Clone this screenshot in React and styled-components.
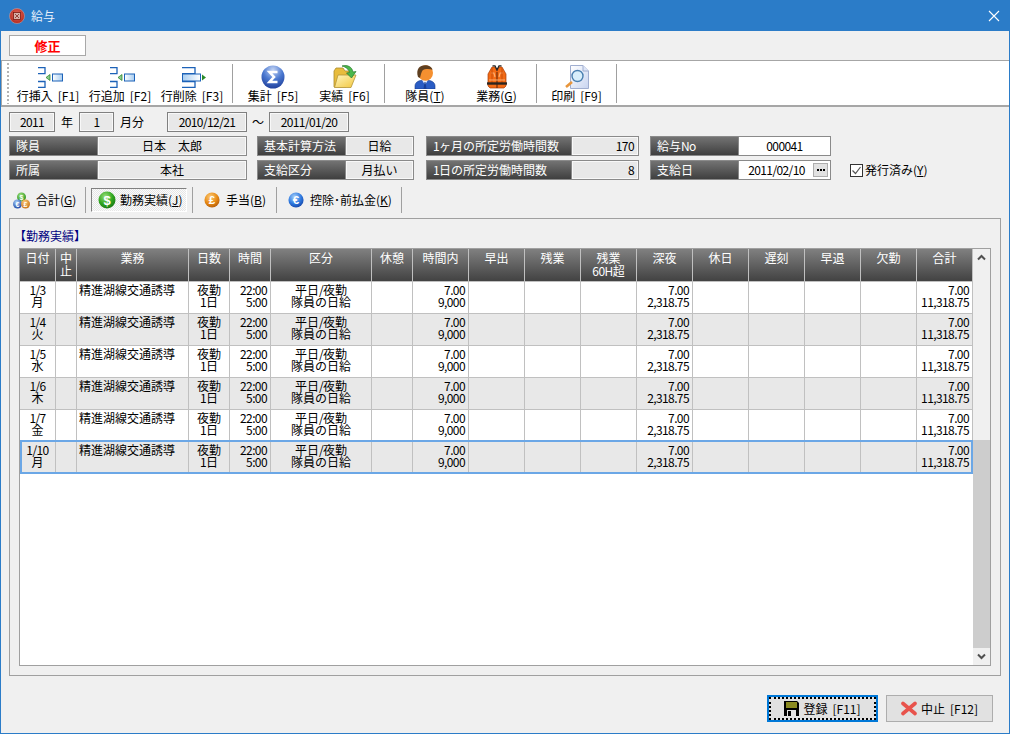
import React from "react";
import styled, { createGlobalStyle } from "styled-components";

const GlobalStyle = createGlobalStyle`
  html, body { margin: 0; padding: 0; background: #f0f0f0; }
  * { box-sizing: border-box; }
`;

const Window = styled.div`
  width: 1010px; height: 734px; display: flex; flex-direction: column;
  background: #f0f0f0; border: 1px solid #2b7cc8; border-top: 0; overflow: hidden;
  font-family: "Noto Sans CJK JP", "Liberation Sans", sans-serif; font-size: 12px; line-height: 12px; color: #000;
`;
const TitleBar = styled.div`
  height: 31px; flex: none; background: #2b7cc8; margin: 0 -1px; padding: 0 10px 0 9px;
  display: flex; align-items: center; color: #e8f0fa; gap: 6px;
`;
const TitleText = styled.span`flex: 1; font-size: 12px;`;
const ModeRow = styled.div`height: 29px; flex: none; padding: 4px 0 0 8px;`;
const ModeLabel = styled.div`
  width: 77px; height: 21px; background: #fff; border: 1px solid #a8a8a8; color: #f00; font-weight: 700;
  display: flex; align-items: center; justify-content: center; font-size: 13px;
`;
const Toolbar = styled.div`
  height: 47px; flex: none; background: #fff; border-top: 1px solid #a6a6a6; border-bottom: 2px solid #a6a6a6;
  border-left: 1px solid #a6a6a6; display: flex; align-items: flex-start;
`;
const Grip = styled.div`
  width: 2px; height: 41px; margin: 2px 3px 0 5px; flex: none;
  background: repeating-linear-gradient(to bottom, #b4b4b4 0 2px, transparent 2px 4px);
`;
const ToolBtn = styled.div`
  width: ${p => p.$w}px; flex: none; display: flex; flex-direction: column; align-items: center; padding-top: 4px;
  white-space: nowrap;
`;
const ToolIcon = styled.div`height: 24px; display: flex; align-items: center; justify-content: center; margin-bottom: 1px;`;
const ToolLabel = styled.div`line-height: 12px; height: 12px;`;
const ToolSep = styled.div`width: 1px; height: 39px; margin: 3px 4px 0; background: #a0a0a0; flex: none;`;
const M = styled.span`letter-spacing: -0.6px;`;
const Key = styled.span`margin-left: 5px;`;
const Info = styled.div`flex: none; padding: 5px 0 0 8px; display: flex; flex-direction: column; gap: 4px;`;
const InfoRow = styled.div`display: flex; height: 20px; align-items: stretch;`;
const Box = styled.div`
  width: ${p => p.$w}px; flex: none; background: #e8e8e8; border: 1px solid #808080; box-shadow: inset 0 0 0 1px #f8f8f8;
  display: flex; align-items: center; justify-content: center;
`;
const Plain = styled.span`
  display: flex; align-items: center; margin: 0 ${p => p.$mr}px 0 ${p => p.$ml}px; white-space: nowrap;
`;
const Field = styled.div`display: flex; flex: none; width: ${p => p.$w}px; margin-right: ${p => p.$mr || 0}px;`;
const FieldLabel = styled.div`
  width: ${p => p.$w}px; flex: none; border: 1px solid #8a8a8a; border-right: 0; color: #fff; padding-left: 6px;
  background: linear-gradient(to bottom, #737373, #3f3f3f); display: flex; align-items: center; white-space: nowrap;
`;
const FieldValue = styled.div`
  flex: 1; border: 1px solid #8a8a8a; background: ${p => p.$white ? "#fff" : "#e8e8e8"};
  box-shadow: ${p => p.$white ? "none" : "inset 0 0 0 1px #f8f8f8"};
  display: flex; align-items: center; justify-content: ${p => p.$right ? "flex-end" : "center"};
  padding-right: ${p => p.$right ? 4 : 0}px;
`;
const DateInner = styled.div`flex: 1; display: flex; align-items: center; justify-content: center; padding-left: 1px;`;
const DotsBtn = styled.div`
  width: 15px; height: 14px; margin-right: 2px; background: #e1e1e1; border: 1px solid #adadad; display: flex;
  align-items: center; justify-content: center; gap: 1px;
`;
const Dot = styled.i`width: 2px; height: 2px; background: #000; display: block;`;
const CheckWrap = styled.div`display: flex; align-items: center; gap: 2px; margin-left: 19px;`;
const CheckBox = styled.div`width: 13px; height: 13px; border: 1px solid #333; background: #fff; display: flex; align-items: center; justify-content: center;`;

const Tabs = styled.div`height: 26px; margin-top: 7px; padding-left: 8px; display: flex; flex: none; align-items: center;`;
const Tab = styled.div`
  width: ${p => p.$w}px; height: 24px; flex: none; display: flex; align-items: center; gap: 6px; padding-left: ${p => p.$pl}px;
  white-space: nowrap; margin: 0 ${p => p.$mx || 0}px;
`;
const ActiveTab = styled(Tab)`
  gap: 4px; border: 1px solid #808080; border-right-color: #fff; border-bottom-color: #fff;
  background: repeating-conic-gradient(#e6e6e6 0 25%, #fbfbfb 0 50%) 0 0 / 2px 2px;
`;
const TabSep = styled.div`width: 1px; height: 26px; background: #a0a0a0; flex: none;`;

const Panel = styled.div`
  margin: 5px 8px 0 8px; height: 458px; flex: none; border: 1px solid #a0a0a0; padding: 10px 9px 9px;
  display: flex; flex-direction: column;
`;
const Legend = styled.div`color: #000080; height: 14px; line-height: 14px; margin: 0 0 5px -5px; flex: none;`;
const GridWrap = styled.div`flex: 1; display: flex; border: 1px solid #a0a0a0; background: #fff; min-height: 0;`;
const Grid = styled.div`flex: 1; min-width: 0;`;
const cols = "36px 21px 112px 41px 41px 101px 41px repeat(10, 56px)";
const HeadRow = styled.div`
  display: grid; grid-template-columns: ${cols}; height: 33px;
  background: linear-gradient(to bottom, #808080, #424242); border-bottom: 1px solid #c0c0c0;
`;
const HeadCell = styled.div`
  color: #fff; text-align: center; padding-top: 2px; line-height: 13px; border-right: 1px solid #c0c0c0;
`;
const Row = styled.div`
  position: relative; display: grid; grid-template-columns: ${cols}; height: 32px; border-bottom: 1px solid #c0c0c0;
  background: ${p => p.$alt ? "#e8e8e8" : "#fff"};
`;
const Cell = styled.div`
  padding: 2px ${p => p.$align === "right" ? 3 : 0}px 0 ${p => p.$align === "left" ? 2 : 0}px;
  text-align: ${p => p.$align || "center"}; border-right: 1px solid #c0c0c0; white-space: nowrap; line-height: 12px;
`;
const Line = styled.div`height: 12px;`;
const SelectFrame = styled.div`
  position: absolute; inset: -2px 0 -1px 0; border: 2px solid #6ba7e6; pointer-events: none;
`;
const ScrollBar = styled.div`width: 17px; flex: none; background: #f0f0f0; display: flex; flex-direction: column;`;
const ScrollBtn = styled.div`height: 17px; flex: none; display: flex; align-items: center; justify-content: center;`;
const Track = styled.div`flex: 1; display: flex; flex-direction: column; justify-content: flex-end;`;
const Thumb = styled.div`height: 208px; background: #cdcdcd;`;

const Footer = styled.div`flex: 1; display: flex; justify-content: flex-end; padding: 19px 16px 0 0; gap: 8px; align-items: flex-start;`;
const Btn = styled.div`
  width: ${p => p.$w}px; height: 27px; background: #e1e1e1; border: 1px solid #adadad;
  display: flex; align-items: center; justify-content: center; gap: 4px; white-space: nowrap;
`;
const DefaultBtn = styled(Btn)`
  border: 2px solid #0078d7; outline: 2px dotted #000; outline-offset: -4px;
`;

const Bracket = ({ mode }) => (
  <svg width="30" height="21" viewBox="0 0 30 21">
    <defs>
      <linearGradient id={"bg" + mode} x1="0" x2="1"><stop offset="0" stopColor={mode === "del" ? "#a8cdf0" : "#fff"} /><stop offset="1" stopColor={mode === "del" ? "#fff" : "#a8cdf0"} /></linearGradient>
    </defs>
    {mode === "del" ? (
      <>
        <path d="M5 .7H18V6.700H5M5 14.500H18V20.400H5" fill="none" stroke="#1c62b8" strokeWidth="1.300" />
        <rect x="5.500" y="7" width="18" height="7" fill={`url(#bg${mode})`} stroke="#1c62b8" />
        <path d="M25 7.500v6l4-3z" fill="#2a8a2a" />
      </>
    ) : (
      <>
        <path d="M5 .7H12V6.700H5M5 14.500H12V20.400H5" fill="none" stroke="#1c62b8" strokeWidth="1.300" />
        <path d="M17 7.500v6l-4-3z" fill="#8ccf8c" stroke="#1f7a1f" strokeWidth=".7" />
        <rect x="19.500" y="7" width="10" height="7" fill={`url(#bg${mode})`} stroke="#1c62b8" />
      </>
    )}
  </svg>
);
const SigmaIcon = () => (
  <svg width="24" height="24" viewBox="0 0 24 24">
    <defs><radialGradient id="sg" cx=".5" cy=".2" r=".85"><stop offset="0" stopColor="#c4d4f4" /><stop offset=".5" stopColor="#4a78d0" /><stop offset="1" stopColor="#1c3a96" /></radialGradient></defs>
    <circle cx="12" cy="12" r="11.500" fill="url(#sg)" />
    <path d="M16.500 7H8.500l4.500 5-4.500 5h8" fill="none" stroke="#fff" strokeWidth="2.600" />
  </svg>
);
const FolderIcon = () => (
  <svg width="24" height="24" viewBox="0 0 24 24">
    <defs><linearGradient id="fd" x1="0" y1="0" x2="1" y2="1"><stop offset="0" stopColor="#fff6c0" /><stop offset="1" stopColor="#f2c63c" /></linearGradient></defs>
    <path d="M1 22V6l2-3h7l2 3h6v10l-5 6z" fill="#e8bc3c" stroke="#a98a2c" strokeWidth=".8" />
    <path d="M1.500 22.500L5 10h18l-5 12.500z" fill="url(#fd)" stroke="#b5953a" strokeWidth=".8" />
    <path d="M9 1c6-1.500 10 1 11 6l3-.5L18.500 13 13.500 8l3-.5C16 4.500 13 2 9 1z" fill="#4ab84c" stroke="#2a7a2c" strokeWidth=".7" />
  </svg>
);
const PersonIcon = () => (
  <svg width="22" height="24" viewBox="0 0 22 24">
    <path d="M1 24v-3c0-4 4-6 10-6s10 2 10 6v3z" fill="#2a5cc4" stroke="#163a8a" strokeWidth=".6" />
    <path d="M8 15l3 5 3-5z" fill="#e6eefa" />
    <path d="M10.500 17h1l1 7h-3z" fill="#173d96" />
    <ellipse cx="11.500" cy="8" rx="7.500" ry="7.700" fill="#f59030" />
    <path d="M4 12C1.500 4 6 .3 11 .3c4 0 7 2 7.500 4.500-3-1-8-1-10 .7C7.500 7 7 9 6 13z" fill="#5e3f20" />
  </svg>
);
const VestIcon = () => (
  <svg width="22" height="24" viewBox="0 0 22 24">
    <path d="M2 21V9l4-7h3l2 4 2-4h3l4 7v12l-2 2H4z" fill="#f26a14" stroke="#a63c08" strokeWidth=".7" />
    <path d="M5 8h3l1 4M17 8h-3l-1 4" fill="none" stroke="#fcae70" strokeWidth="1.200" />
    <path d="M11 7v16" stroke="#6e2a08" strokeWidth="1.200" />
    <path d="M6 3v15M16 3v15" stroke="#c84c08" />
    <path d="M1 18.500h20" stroke="#2a2420" strokeWidth="2.400" />
    <path d="M3 15h16" stroke="#fcae70" />
    <path d="M6.500 .8h2.500L11 5l2-4.200h2.500" fill="none" stroke="#222" strokeWidth="1.300" />
  </svg>
);
const PreviewIcon = () => (
  <svg width="26" height="24" viewBox="0 0 26 24">
    <defs><linearGradient id="pd" x1="0" y1="0" x2="1" y2="1"><stop offset="0" stopColor="#fff" /><stop offset="1" stopColor="#c8d4f0" /></linearGradient></defs>
    <path d="M6.500 .5H19l5.500 5.500v17.500H6.500z" fill="url(#pd)" stroke="#a0aed0" />
    <path d="M19 .5V6h5.500" fill="#dde5f7" stroke="#a0aed0" />
    <path d="M8 17l-6 5" stroke="#e8963c" strokeWidth="2.600" />
    <circle cx="13.500" cy="11" r="5.500" fill="#d8eefb" stroke="#4a7fb0" strokeWidth="1.400" />
  </svg>
);
const CoinText = styled.text`font-family: "Liberation Sans", sans-serif; font-weight: 700; fill: #fff;`;
const palette = {
  green: ["#9be07a", "#2fa51e", "#146c10"],
  orange: ["#fbcc7a", "#e88a14", "#a85208"],
  blue: ["#a8d0fa", "#2f7ae0", "#103a9c"],
};
const Coin = ({ c, ch, id, size = 18 }) => (
  <svg width={size} height={size} viewBox="0 0 18 18">
    <defs><radialGradient id={id} cx=".4" cy=".3" r=".8"><stop offset="0" stopColor={palette[c][0]} /><stop offset=".55" stopColor={palette[c][1]} /><stop offset="1" stopColor={palette[c][2]} /></radialGradient></defs>
    <circle cx="9" cy="9" r="8.500" fill={`url(#${id})`} />
    <CoinText x="9" y="13.500" fontSize="13" textAnchor="middle">{ch}</CoinText>
  </svg>
);
const CoinsIcon = () => (
  <svg width="17" height="17" viewBox="0 0 17 17">
    <defs>
      <radialGradient id="c1" cx=".4" cy=".3" r=".8"><stop offset="0" stopColor="#9be07a" /><stop offset="1" stopColor="#1f8a14" /></radialGradient>
      <radialGradient id="c2" cx=".4" cy=".3" r=".8"><stop offset="0" stopColor="#a8d0fa" /><stop offset="1" stopColor="#103a9c" /></radialGradient>
      <radialGradient id="c3" cx=".4" cy=".3" r=".8"><stop offset="0" stopColor="#fbcc7a" /><stop offset="1" stopColor="#c46a0c" /></radialGradient>
    </defs>
    <circle cx="8.500" cy="5" r="4.500" fill="url(#c1)" />
    <circle cx="4.500" cy="12" r="4.500" fill="url(#c2)" />
    <circle cx="12.500" cy="12" r="4.500" fill="url(#c3)" />
    <CoinText x="8.500" y="7.500" fontSize="7" textAnchor="middle">$</CoinText>
    <CoinText x="4.500" y="14.500" fontSize="7" textAnchor="middle">€</CoinText>
    <CoinText x="12.500" y="14.500" fontSize="7" textAnchor="middle">£</CoinText>
  </svg>
);
const AppIcon = () => (
  <svg width="16" height="16" viewBox="0 0 16 16">
    <defs><radialGradient id="ap" cx=".5" cy=".4" r=".7"><stop offset="0" stopColor="#e8685c" /><stop offset="1" stopColor="#a81e14" /></radialGradient></defs>
    <circle cx="8" cy="8" r="7.500" fill="url(#ap)" stroke="#d8b0a8" strokeWidth=".5" />
    <rect x="4.500" y="4.500" width="7" height="7" fill="#d8b0a8" stroke="#7a1810" strokeWidth=".8" />
    <path d="M6 6l4 4M10 6l-4 4" stroke="#7a1810" strokeWidth=".7" />
  </svg>
);
const CloseIcon = () => (
  <svg width="12" height="12" viewBox="0 0 12 12"><path d="M1 1l10 10M11 1L1 11" stroke="#fff" strokeWidth="1.100" /></svg>
);
const Floppy = () => (
  <svg width="15" height="15" viewBox="0 0 15 15">
    <path d="M0 0h13l2 2v13H0z" fill="#000" />
    <rect x="2" y="1" width="11" height="6" fill="#8a8a20" />
    <rect x="3" y="9" width="9" height="6" fill="#e1e1e1" />
    <rect x="4" y="10" width="3" height="5" fill="#000" />
  </svg>
);
const RedX = () => (
  <svg width="16" height="15" viewBox="0 0 16 15">
    <path d="M2 2.500l12 10M14 2.500l-12 10" stroke="#e8534c" strokeWidth="3.600" strokeLinecap="round" />
  </svg>
);
const Check = () => (
  <svg width="11" height="11" viewBox="0 0 11 11"><path d="M1.500 5.500l3 3 5-6.500" fill="none" stroke="#555" strokeWidth="1.200" /></svg>
);
const Chevron = ({ up }) => (
  <svg width="9" height="7" viewBox="0 0 9 7"><path d={up ? "M1 5.500l3.500-3.500 3.500 3.500" : "M1 1.500l3.500 3.500 3.500-3.500"} fill="none" stroke="#505050" strokeWidth="2" /></svg>
);

const Accel = ({ k }) => <>(<u>{k}</u>)</>;

const heads = [
  ["日付"], ["中", "止"], ["業務"], ["日数"], ["時間"], ["区分"], ["休憩"], ["時間内"], ["早出"], ["残業"],
  ["残業", <><M>60H</M>超</>], ["深夜"], ["休日"], ["遅刻"], ["早退"], ["欠勤"], ["合計"],
];
const rows = [["1/3", "月"], ["1/4", "火"], ["1/5", "水"], ["1/6", "木"], ["1/7", "金"], ["1/10", "月"]];

const Two = ({ a, b }) => <><Line>{a}</Line><Line>{b}</Line></>;
const Num = ({ a, b }) => <Two a={<M>{a}</M>} b={<M>{b}</M>} />;

export default function App() {
  return (
    <Window>
      <GlobalStyle />
      <TitleBar><AppIcon /><TitleText>給与</TitleText><CloseIcon /></TitleBar>
      <ModeRow><ModeLabel>修正</ModeLabel></ModeRow>
      <Toolbar>
        <Grip />
        <ToolBtn $w={72}><ToolIcon><Bracket mode="ins" /></ToolIcon><ToolLabel>行挿入<Key>[F1]</Key></ToolLabel></ToolBtn>
        <ToolBtn $w={72}><ToolIcon><Bracket mode="add" /></ToolIcon><ToolLabel>行追加<Key>[F2]</Key></ToolLabel></ToolBtn>
        <ToolBtn $w={72}><ToolIcon><Bracket mode="del" /></ToolIcon><ToolLabel>行削除<Key>[F3]</Key></ToolLabel></ToolBtn>
        <ToolSep />
        <ToolBtn $w={72}><ToolIcon><SigmaIcon /></ToolIcon><ToolLabel>集計<Key>[F5]</Key></ToolLabel></ToolBtn>
        <ToolBtn $w={71}><ToolIcon><FolderIcon /></ToolIcon><ToolLabel>実績<Key>[F6]</Key></ToolLabel></ToolBtn>
        <ToolSep />
        <ToolBtn $w={72}><ToolIcon><PersonIcon /></ToolIcon><ToolLabel>隊員<Accel k="T" /></ToolLabel></ToolBtn>
        <ToolBtn $w={71}><ToolIcon><VestIcon /></ToolIcon><ToolLabel>業務<Accel k="G" /></ToolLabel></ToolBtn>
        <ToolSep />
        <ToolBtn $w={71}><ToolIcon><PreviewIcon /></ToolIcon><ToolLabel>印刷<Key>[F9]</Key></ToolLabel></ToolBtn>
        <ToolSep />
      </Toolbar>
      <Info>
        <InfoRow>
          <Box $w={46}><M>2011</M></Box>
          <Plain $ml={6} $mr={6}>年</Plain>
          <Box $w={35}><M>1</M></Box>
          <Plain $ml={6} $mr={23}>月分</Plain>
          <Box $w={80}><M>2010/12/21</M></Box>
          <Plain $ml={5} $mr={5}>～</Plain>
          <Box $w={80}><M>2011/01/20</M></Box>
        </InfoRow>
        <InfoRow>
          <Field $w={238} $mr={10}><FieldLabel $w={88}>隊員</FieldLabel><FieldValue>日本　太郎</FieldValue></Field>
          <Field $w={157} $mr={12}><FieldLabel $w={88}>基本計算方法</FieldLabel><FieldValue>日給</FieldValue></Field>
          <Field $w={213} $mr={11}><FieldLabel $w={145}><span><M>1</M>ヶ月の所定労働時間数</span></FieldLabel><FieldValue $right><M>170</M></FieldValue></Field>
          <Field $w={181}><FieldLabel $w={88}><span>給与<M>No</M></span></FieldLabel><FieldValue $white><M>000041</M></FieldValue></Field>
        </InfoRow>
        <InfoRow>
          <Field $w={238} $mr={10}><FieldLabel $w={88}>所属</FieldLabel><FieldValue>本社</FieldValue></Field>
          <Field $w={157} $mr={12}><FieldLabel $w={88}>支給区分</FieldLabel><FieldValue>月払い</FieldValue></Field>
          <Field $w={213} $mr={11}><FieldLabel $w={145}><span><M>1</M>日の所定労働時間数</span></FieldLabel><FieldValue $right><M>8</M></FieldValue></Field>
          <Field $w={181}>
            <FieldLabel $w={88}>支給日</FieldLabel>
            <FieldValue $white><DateInner><M>2011/02/10</M></DateInner><DotsBtn><Dot /><Dot /><Dot /></DotsBtn></FieldValue>
          </Field>
          <CheckWrap><CheckBox><Check /></CheckBox><span>発行済み<Accel k="Y" /></span></CheckWrap>
        </InfoRow>
      </Info>
      <Tabs>
        <Tab $w={76} $pl={4}><CoinsIcon /><span>合計<Accel k="G" /></span></Tab>
        <TabSep />
        <ActiveTab $w={96} $pl={6} $mx={5}><Coin c="green" ch="$" id="cg" /><span>勤務実績<Accel k="J" /></span></ActiveTab>
        <TabSep />
        <Tab $w={83} $pl={11}><Coin c="orange" ch="£" id="co" size={16} /><span>手当<Accel k="B" /></span></Tab>
        <TabSep />
        <Tab $w={124} $pl={11}><Coin c="blue" ch="€" id="cb" size={16} /><span>控除･前払金<Accel k="K" /></span></Tab>
        <TabSep />
      </Tabs>
      <Panel>
        <Legend>【勤務実績】</Legend>
        <GridWrap>
          <Grid>
            <HeadRow>
              {heads.map((h, i) => <HeadCell key={i}>{h.map((t, j) => <div key={j}>{t}</div>)}</HeadCell>)}
            </HeadRow>
            {rows.map((r, i) => (
              <Row key={i} $alt={i % 2 === 1}>
                <Cell><Two a={<M>{r[0]}</M>} b={r[1]} /></Cell>
                <Cell />
                <Cell $align="left">精進湖線交通誘導</Cell>
                <Cell><Two a="夜勤" b={<><M>1</M>日</>} /></Cell>
                <Cell $align="right"><Num a="22:00" b="5:00" /></Cell>
                <Cell><Two a={<>平日<M>/</M>夜勤</>} b="隊員の日給" /></Cell>
                <Cell />
                <Cell $align="right"><Num a="7.00" b="9,000" /></Cell>
                <Cell /><Cell /><Cell />
                <Cell $align="right"><Num a="7.00" b="2,318.75" /></Cell>
                <Cell /><Cell /><Cell /><Cell />
                <Cell $align="right"><Num a="7.00" b="11,318.75" /></Cell>
                {i === 5 && <SelectFrame />}
              </Row>
            ))}
          </Grid>
          <ScrollBar>
            <ScrollBtn><Chevron up /></ScrollBtn>
            <Track><Thumb /></Track>
            <ScrollBtn><Chevron /></ScrollBtn>
          </ScrollBar>
        </GridWrap>
      </Panel>
      <Footer>
        <DefaultBtn $w={111}><Floppy /><span>登録<Key>[F11]</Key></span></DefaultBtn>
        <Btn $w={107}><RedX /><span>中止<Key>[F12]</Key></span></Btn>
      </Footer>
    </Window>
  );
}
